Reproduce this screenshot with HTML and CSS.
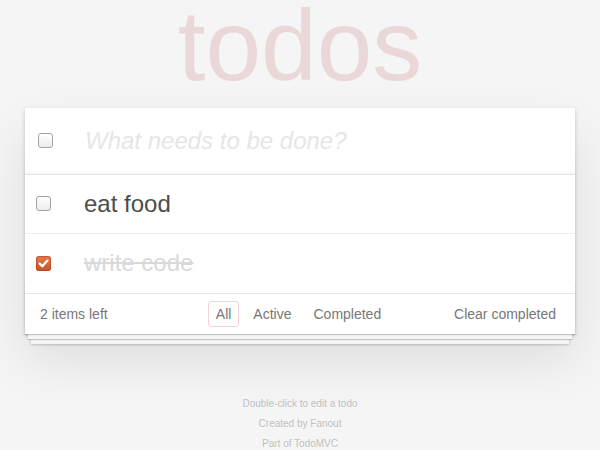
FILE: index.html
```html
<!DOCTYPE html>
<html lang="en">
<head>
<meta charset="utf-8">
<title>todos</title>
<link rel="stylesheet" href="styles.css">
</head>
<body>
<section class="todoapp">
  <h1 class="title">todos</h1>
  <div class="card">
    <div class="new-row">
      <span class="check"></span>
      <input class="new-todo" placeholder="What needs to be done?">
    </div>
    <ul class="todo-list">
      <li class="todo">
        <span class="check"></span>
        <label class="todo-label">eat food</label>
      </li>
      <li class="todo done">
        <span class="check checked"><svg width="15" height="15" viewBox="0 0 15 15"><path d="M3.6 7.6 L6.3 10.2 L11.4 4.6" fill="none" stroke="#fff" stroke-width="2.3" stroke-linecap="round" stroke-linejoin="round"/></svg></span>
        <label class="todo-label">write code</label>
      </li>
    </ul>
    <footer class="footer">
      <span class="count">2 items left</span>
      <ul class="filters">
        <li><a class="filter selected">All</a></li>
        <li><a class="filter">Active</a></li>
        <li><a class="filter">Completed</a></li>
      </ul>
      <button class="clear">Clear completed</button>
    </footer>
  </div>
  <footer class="info">
    <p>Double-click to edit a todo</p>
    <p>Created by Fanout</p>
    <p>Part of TodoMVC</p>
  </footer>
</section>
</body>
</html>
```
FILE: styles.css
```css
html, body {
  margin: 0;
  padding: 0;
}
body {
  background: #f5f5f5;
  font: 14px "Liberation Sans", Helvetica, Arial, sans-serif;
  line-height: 1.4em;
  color: #4d4d4d;
  -webkit-font-smoothing: antialiased;
}
.todoapp {
  width: 550px;
  margin: 0 auto;
}
.title {
  margin: 0;
  font-size: 100px;
  font-weight: 100;
  line-height: 90px;
  text-align: center;
  color: rgba(175, 47, 47, 0.15);
}
.card {
  position: relative;
  margin-top: 18px;
  background: #fff;
  box-shadow: 0 2px 4px 0 rgba(0, 0, 0, 0.2), 0 25px 50px 0 rgba(0, 0, 0, 0.1);
}
.check {
  flex: none;
  width: 13px;
  height: 13px;
  border: 1px solid #a3a3a3;
  border-radius: 3px;
  background: linear-gradient(#ffffff, #ececec);
  box-shadow: inset 0 1px 0 #fff;
  display: flex;
}
.check.checked {
  width: 15px;
  height: 15px;
  border: none;
  background: linear-gradient(#e47a4f, #c9532b);
  box-shadow: inset 0 0 0 1px rgba(150, 55, 20, 0.45);
}
.check svg {
  display: block;
}
.new-row {
  display: flex;
  align-items: center;
  padding-left: 13px;
  box-shadow: inset 0 -2px 1px rgba(0, 0, 0, 0.03);
}
.new-todo {
  flex: 1;
  min-width: 0;
  margin: 0;
  border: none;
  outline: none;
  background: transparent;
  padding: 16px 16px 16px 32px;
  font-family: inherit;
  font-size: 24px;
  line-height: 1.4em;
  color: #4d4d4d;
}
.new-todo::placeholder {
  font-style: italic;
  font-weight: 300;
  color: #e6e6e6;
}
.todo-list {
  margin: 0;
  padding: 0;
  list-style: none;
  border-top: 1px solid #e6e6e6;
}
.todo {
  display: flex;
  align-items: center;
  padding-left: 11px;
  border-bottom: 1px solid #ededed;
  font-size: 24px;
}
.todo:last-child {
  border-bottom: none;
}
.todo-label {
  flex: 1;
  padding: 15px 15px 15px 33px;
  line-height: 1.2;
  color: #4d4d4d;
}
.todo.done .todo-label {
  color: #d9d9d9;
  text-decoration: line-through;
}
.footer {
  position: relative;
  display: grid;
  grid-template-columns: 1fr auto 1fr;
  grid-template-rows: 20px;
  align-items: center;
  height: 20px;
  padding: 10px 15px;
  border-top: 1px solid #e6e6e6;
  color: #777;
  line-height: 20px;
}
.footer::before {
  content: "";
  position: absolute;
  left: 0;
  right: 0;
  bottom: 0;
  height: 50px;
  overflow: hidden;
  box-shadow: 0 1px 1px rgba(0, 0, 0, 0.2),
    0 8px 0 -3px #f6f6f6,
    0 9px 1px -3px rgba(0, 0, 0, 0.2),
    0 16px 0 -6px #f6f6f6,
    0 17px 2px -6px rgba(0, 0, 0, 0.2);
}
.count {
  justify-self: start;
}
.filters {
  display: flex;
  margin: 0 3px 0 0;
  padding: 0;
  list-style: none;
}
.filter {
  display: block;
  margin: 0 3px;
  padding: 3px 7px;
  border: 1px solid transparent;
  border-radius: 3px;
  line-height: 18px;
  color: inherit;
  text-decoration: none;
}
.filter.selected {
  border-color: rgba(175, 47, 47, 0.2);
}
.clear {
  justify-self: end;
  margin: 0;
  padding: 0 4px 0 0;
  border: none;
  background: none;
  font: inherit;
  line-height: 20px;
  color: inherit;
  cursor: pointer;
}
.info {
  margin-top: 65px;
  color: #bfbfbf;
  font-size: 10px;
  text-align: center;
  text-shadow: 0 1px 0 rgba(255, 255, 255, 0.5);
}
.info p {
  margin: 10px 0;
  line-height: 1;
}
```
